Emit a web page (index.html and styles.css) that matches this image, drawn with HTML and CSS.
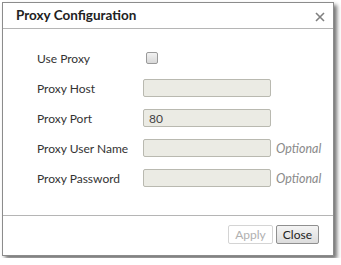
FILE: index.html
```html
<!DOCTYPE html>
<html lang="en">

<head>
  <meta charset="UTF-8">
  <title>Proxy Configuration</title>
  <link rel="stylesheet" href="styles.css">
</head>

<body>

  <div class="dialog">
    <div class="dialog_header">
      <span class="dialog_title">Proxy Configuration</span>
      <span class="dialog_close">
        <svg width="10" height="10" viewBox="0 0 10 10">
          <path d="M1 1 L9 9 M9 1 L1 9" stroke="#808080" stroke-width="1.6" fill="none" />
        </svg>
      </span>
    </div>

    <div class="dialog_body">
      <div class="form_row">
        <label class="form_label">Use Proxy</label>
        <span class="checkbox"></span>
      </div>
      <div class="form_row">
        <label class="form_label">Proxy Host</label>
        <input class="form_input" type="text" value="" disabled>
      </div>
      <div class="form_row">
        <label class="form_label">Proxy Port</label>
        <input class="form_input" type="text" value="80" disabled>
      </div>
      <div class="form_row">
        <label class="form_label">Proxy User Name</label>
        <input class="form_input" type="text" value="" disabled>
        <span class="form_hint">Optional</span>
      </div>
      <div class="form_row">
        <label class="form_label">Proxy Password</label>
        <input class="form_input" type="password" value="" disabled>
        <span class="form_hint">Optional</span>
      </div>
    </div>

    <div class="dialog_footer">
      <button class="btn btn_disabled" disabled>Apply</button>
      <button class="btn">Close</button>
    </div>
  </div>

</body>

</html>
```

FILE: styles.css
```css
body {
  margin: 0;
  padding: 2px;
  font-family: Lato, "Open Sans", Arial, sans-serif;
  font-size: 12px;
  color: #333;
  background: #fff;
}

.dialog {
  width: 330px;
  height: 252px;
  border: 1px solid #8c8c8c;
  background: #fff;
  box-shadow: 3px 3px 4px rgba(0, 0, 0, 0.55);
  display: flex;
  flex-direction: column;
}

.dialog_header {
  height: 25px;
  border-bottom: 1px solid #b5b5b5;
  display: flex;
  align-items: center;
  justify-content: space-between;
  padding: 0 8px 0 13px;
}

.dialog_title {
  font-weight: bold;
  font-size: 13.5px;
  color: #222;
  margin-top: -1px;
}

.dialog_close {
  display: flex;
  margin-top: 2px;
}

.dialog_body {
  height: 166px;
  padding: 20px 0 0 34px;
  display: flex;
  flex-direction: column;
  gap: 12px;
  border-bottom: 1px solid #b5b5b5;
}

.form_row {
  height: 18px;
  display: flex;
  align-items: center;
}

.form_label {
  width: 106px;
}

.checkbox {
  width: 10px;
  height: 10px;
  margin-left: 3px;
  border: 1px solid #9a9a9a;
  border-radius: 2px;
  background: linear-gradient(#f2f2f2, #d8d8d8);
}

.form_input {
  box-sizing: border-box;
  width: 128px;
  height: 18px;
  margin: 0;
  padding: 0 5px;
  border: 1px solid #b9b9b0;
  border-radius: 2px;
  background: #ebebe4;
  font-family: inherit;
  font-size: 12px;
  color: #444;
}

.form_hint {
  margin-left: 5px;
  font-style: italic;
  color: #8a8a8a;
  font-size: 12.5px;
}

.dialog_footer {
  flex: 1;
  display: flex;
  justify-content: flex-end;
  align-items: flex-start;
  gap: 3px;
  padding: 9px 14px 0 0;
}

.btn {
  box-sizing: border-box;
  height: 19px;
  padding: 0 6px;
  font-family: inherit;
  font-size: 12px;
  color: #222;
  border: 1px solid #8f8f8f;
  border-radius: 2px;
  background: linear-gradient(#f4f4f4, #dcdcdc);
}

.btn_disabled {
  color: #b0b0b0;
  border-color: #d4d4d4;
  background: #fff;
}
```
